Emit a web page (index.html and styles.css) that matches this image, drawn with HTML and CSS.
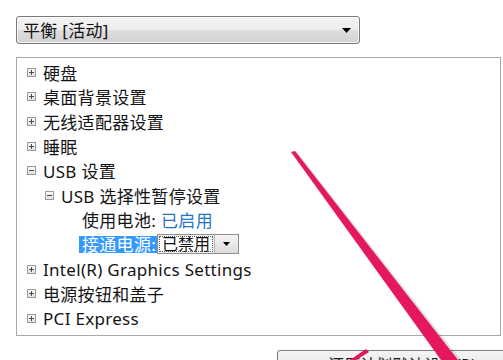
FILE: index.html
```html
<!DOCTYPE html>
<html lang="zh-CN">
<head>
  <meta charset="UTF-8">
  <title>高级设置</title>
  <link rel="stylesheet" href="styles.css">
</head>
<body>
  <!-- Plan picker -->
  <div class="plan-select">
    <span>平衡 [活动]</span>
    <svg class="drop" width="9" height="5" viewBox="0 0 9 5"><path d="M0 0h9L4.5 5z" fill="#000"/></svg>
  </div>

  <!-- Settings tree -->
  <div class="tree">
    <div class="row"><span class="toggle plus"></span>硬盘</div>
    <div class="row"><span class="toggle plus"></span>桌面背景设置</div>
    <div class="row"><span class="toggle plus"></span>无线适配器设置</div>
    <div class="row"><span class="toggle plus"></span>睡眠</div>
    <div class="row"><span class="toggle minus"></span>USB 设置</div>
    <div class="row sub"><span class="toggle minus"></span>USB 选择性暂停设置</div>
    <div class="row leaf">使用电池: <span class="value">已启用</span></div>
    <div class="row leaf">
      <span class="selected">接通电源:</span>
      <span class="combo">
        <span class="combo-value">已禁用</span>
        <span class="combo-btn"><svg width="7" height="4" viewBox="0 0 7 4"><path d="M0 0h7L3.5 4z" fill="#000"/></svg></span>
      </span>
    </div>
    <div class="row"><span class="toggle plus"></span>Intel(R) Graphics Settings</div>
    <div class="row"><span class="toggle plus"></span>电源按钮和盖子</div>
    <div class="row"><span class="toggle plus"></span>PCI Express</div>
  </div>

  <div class="footer">
    <button class="button">还原计划默认设置(R)</button>
  </div>

  <!-- Annotation arrow drawn over the dialog -->
  <svg class="pointer" width="503" height="360" viewBox="0 0 503 360">
    <polygon points="294,153 297,152 461,360 447,362" fill="rgba(0,0,0,0.12)"/>
    <polygon points="291,152 295,151 458,360 441,360" fill="#e5175f"/>
    <polygon points="347,362 366,349 369,352 353,362" fill="#e5175f"/>
  </svg>
</body>
</html>
```

FILE: styles.css
```css
* {
  box-sizing: border-box;
}

body {
  margin: 0;
  padding: 16px 2px 0 16px;
  width: 503px;
  height: 360px;
  overflow: hidden;
  position: relative;
  background: #fff;
  color: #141414;
  font-family: "Noto Sans", "Noto Sans CJK SC", sans-serif;
  font-size: 17px;
  letter-spacing: 0.3px;
}

.plan-select {
  width: 344px;
  height: 28px;
  display: flex;
  align-items: center;
  justify-content: space-between;
  padding: 0 8px 0 6px;
  border: 1px solid #7a7a7a;
  border-radius: 3px;
  background: linear-gradient(#f4f4f4 0%, #ececec 50%, #dedede 51%, #d2d2d2 100%);
  box-shadow: inset 0 0 0 1px rgba(255, 255, 255, 0.7);
  line-height: 1;
}

.tree {
  margin-top: 13px;
  width: 485px;
  height: 279px;
  border: 1px solid #a9a9a9;
  padding-top: 2px;
  overflow: hidden;
}

.row {
  height: 24.6px;
  display: flex;
  align-items: center;
  padding-left: 10px;
  white-space: nowrap;
}

.row.sub {
  padding-left: 28px;
}

.row.leaf {
  padding-left: 65px;
}

.toggle {
  width: 9px;
  height: 9px;
  margin-right: 7px;
  flex: none;
  position: relative;
  border: 1px solid #9a9a9a;
  background: linear-gradient(#fafafa, #e2e2e2);
}

.toggle::before,
.toggle.plus::after {
  content: "";
  position: absolute;
  background: #4a4a4a;
}

.toggle::before {
  left: 1px;
  top: 3px;
  width: 5px;
  height: 1px;
}

.toggle.plus::after {
  left: 3px;
  top: 1px;
  width: 1px;
  height: 5px;
}

.value {
  color: #2a74c4;
  margin-left: 5px;
}

.selected {
  background: #3399ff;
  color: #fff;
  margin-left: -3px;
  padding: 0 1px 0 3px;
  line-height: 17px;
}

.combo {
  display: flex;
  height: 20px;
  border: 1px solid #8f8f8f;
  background: #f0f0f0;
}

.combo-value {
  width: 54px;
  margin: 1px;
  padding-left: 2px;
  border: 1px dotted #555;
  background: #fff;
  line-height: 15px;
  font-size: 16px;
  letter-spacing: 0;
}

.combo-btn {
  width: 24px;
  display: flex;
  align-items: center;
  justify-content: center;
  border-left: 1px solid #b5b5b5;
  background: linear-gradient(#f4f4f4, #dcdcdc);
}

.footer {
  margin-top: 14px;
  padding-left: 261px;
}

.button {
  width: 250px;
  height: 26px;
  border: 1px solid #7a7a7a;
  border-radius: 3px;
  background: linear-gradient(#f4f4f4 0%, #ececec 50%, #dedede 51%, #d2d2d2 100%);
  font-family: inherit;
  font-size: 16px;
  color: #1b1b1b;
  padding: 3px 0 0;
  text-align: center;
  line-height: 20px;
}

.pointer {
  position: absolute;
  left: 0;
  top: 0;
  pointer-events: none;
}
```
